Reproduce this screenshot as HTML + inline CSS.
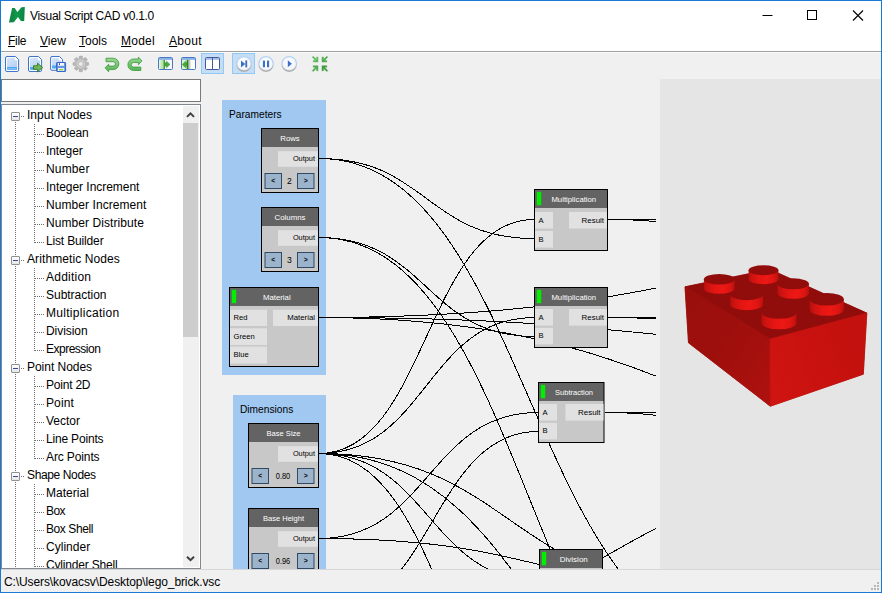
<!DOCTYPE html>
<html>
<head>
<meta charset="utf-8">
<title>Visual Script CAD v0.1.0</title>
<style>
html,body{margin:0;padding:0;}
body{width:882px;height:593px;overflow:hidden;background:#f0f0f0;font-family:"Liberation Sans",sans-serif;font-size:12px;color:#000;position:relative;}
.abs{position:absolute;}
#win{position:absolute;left:0;top:0;width:880px;height:591px;border:1px solid #1778d6;background:#f0f0f0;overflow:hidden;}
#titlebar{position:absolute;left:0;top:0;width:880px;height:30px;background:#fff;}
#title{position:absolute;left:29px;top:8px;font-size:12px;line-height:14px;white-space:nowrap;letter-spacing:-0.3px;}
#menubar{position:absolute;left:0;top:30px;width:880px;height:20px;background:#fff;}
.mi{position:absolute;top:3px;font-size:12px;line-height:14px;white-space:nowrap;}
.mi u{text-decoration:underline;text-underline-offset:1px;}
#menuline{position:absolute;left:0;top:50px;width:880px;height:1px;background:#a0a0a0;}
#toolbar{position:absolute;left:0;top:51px;width:880px;height:25px;background:#f0f0f0;box-shadow:inset 0 1px 0 #fbfbfb;}
.tsel{position:absolute;top:1px;width:21px;height:19px;background:#c5def5;border:1px solid #90c8f6;}
#search{position:absolute;left:0;top:78px;width:198px;height:21px;background:#fff;border:1px solid #7a7a7a;}
#tree{position:absolute;left:0;top:103px;width:198px;height:463px;background:#fff;border:1px solid #828790;overflow:hidden;}
.tr{position:absolute;left:0;height:18px;line-height:18px;font-size:12px;white-space:nowrap;}
.g{left:25px;}
.c{left:44px;}
.exp{position:absolute;width:7px;height:7px;border:1px solid #919191;background:linear-gradient(#fff,#e6e6e6);border-radius:1px;}
.exp i{position:absolute;left:1px;top:3px;width:5px;height:1px;background:#3a4a9a;}
.hd{position:absolute;height:1px;background:repeating-linear-gradient(90deg,#707070 0 1px,transparent 1px 2px);}
.vd{position:absolute;width:1px;background:repeating-linear-gradient(180deg,#707070 0 1px,transparent 1px 2px);}
#sb{position:absolute;left:181px;top:1px;width:16px;height:461px;background:#f0f0f0;}
#thumb{position:absolute;left:0;top:17px;width:15px;height:214px;background:#cdcdcd;}
#editor{position:absolute;left:203px;top:78px;width:452px;height:490px;overflow:hidden;background:#f0f0f0;}
#view3d{position:absolute;left:659px;top:78px;width:221px;height:490px;background:#e5e5e5;overflow:hidden;}
.gd{position:absolute;width:2px;height:2px;background:#b8b8b8;}
#grip{position:absolute;left:0;top:0;z-index:5;}
#status{position:absolute;left:0;top:568px;width:880px;height:23px;background:#f0f0f0;border-top:1px solid #d7d7d7;}
#stext{position:absolute;left:3px;top:5px;font-size:12px;line-height:14px;white-space:nowrap;letter-spacing:-0.1px;}
</style>
</head>
<body>
<div id="win">
  <div id="titlebar">
    <svg class="abs" style="left:0;top:0" width="30" height="30" viewBox="1 1 30 30">
      <defs><linearGradient id="lg" x1="0" y1="0" x2="1" y2="0"><stop offset="0" stop-color="#0b7f3f"/><stop offset="0.5" stop-color="#10994d"/><stop offset="1" stop-color="#0b8443"/></linearGradient></defs>
      <path d="M9 22.6 L12.1 8.1 L14.7 8.1 L17.4 11.9 L21.5 7.3 L24.8 7 L24.2 20.9 L20.9 21.1 L18 16.9 L13.9 22.2 Z" fill="url(#lg)"/>
    </svg>
    <div id="title">Visual Script CAD v0.1.0</div>
    <svg class="abs" style="left:740px;top:0" width="140" height="30" viewBox="0 0 140 30">
      <path d="M21.5 14.5 H31.5" stroke="#000" stroke-width="1" fill="none"/>
      <rect x="66.5" y="9.5" width="9" height="9" stroke="#000" stroke-width="1" fill="none"/>
      <path d="M112 9.5 L122 19.5 M122 9.5 L112 19.5" stroke="#000" stroke-width="1.1" fill="none"/>
    </svg>
  </div>
  <div id="menubar">
    <div class="mi" style="left:7px;letter-spacing:-0.3px"><u>F</u>ile</div>
    <div class="mi" style="left:39px"><u>V</u>iew</div>
    <div class="mi" style="left:78px"><u>T</u>ools</div>
    <div class="mi" style="left:120px;letter-spacing:0.25px"><u>M</u>odel</div>
    <div class="mi" style="left:168px;letter-spacing:0.3px"><u>A</u>bout</div>
  </div>
  <div id="menuline"></div>
  <div id="toolbar">
    <div class="tsel" style="left:200px"></div>
    <div class="tsel" style="left:231px"></div>
    <svg class="abs" style="left:0;top:0" width="340" height="25" viewBox="1 52 340 25">
      <defs>
        <linearGradient id="docg" x1="0" y1="0" x2="0.6" y2="1"><stop offset="0" stop-color="#d9e7fa"/><stop offset="1" stop-color="#b3cff3"/></linearGradient>
        <linearGradient id="grn" x1="0" y1="0" x2="0" y2="1"><stop offset="0" stop-color="#9ad694"/><stop offset="1" stop-color="#57b257"/></linearGradient>
        <linearGradient id="grnh" x1="0" y1="0" x2="1" y2="0"><stop offset="0" stop-color="#e4f9dc"/><stop offset="0.6" stop-color="#b4e2a6"/><stop offset="0.85" stop-color="#5cb458"/><stop offset="1" stop-color="#2a7d2a"/></linearGradient>
        <linearGradient id="shad" x1="0" y1="0" x2="1" y2="0"><stop offset="0" stop-color="#7f9f7f"/><stop offset="1" stop-color="#ffffff"/></linearGradient>
        <radialGradient id="circ" cx="0.5" cy="0.4" r="0.6"><stop offset="0" stop-color="#ffffff"/><stop offset="0.75" stop-color="#f4f6fa"/><stop offset="1" stop-color="#c8ccd4"/></radialGradient>
        <radialGradient id="gearg" cx="0.5" cy="0.5" r="0.5"><stop offset="0" stop-color="#d6d6d6"/><stop offset="0.6" stop-color="#bdbdbd"/><stop offset="1" stop-color="#a2a2a2"/></radialGradient>
        <linearGradient id="cst" x1="0" y1="0" x2="0" y2="1"><stop offset="0" stop-color="#b4d4f6"/><stop offset="0.55" stop-color="#b8cce6"/><stop offset="1" stop-color="#9a9a9a"/></linearGradient>
      </defs>
      <!-- new -->
      <path d="M7 56.500 H15.500 L18.600 59.600 V70 Q18.600 71.500 17.100 71.500 H7 Q5.500 71.500 5.500 70 V58 Q5.500 56.500 7 56.500 Z" fill="#fff" stroke="#3f74cc" stroke-width="1"/>
      <path d="M7 58 H14.800 V60.300 H17.100 V70 H7 Z" fill="url(#docg)"/>
      <rect x="7.200" y="67" width="9.600" height="2.700" fill="#49a9f2"/>
      <rect x="8" y="68" width="8" height="0.800" fill="#8cc8f6"/>
      <!-- open -->
      <path d="M30 56.500 H38.500 L41.600 59.600 V70 Q41.600 71.500 40.100 71.500 H30 Q28.500 71.500 28.500 70 V58 Q28.500 56.500 30 56.500 Z" fill="#fff" stroke="#3f74cc" stroke-width="1"/>
      <path d="M30 58 H37.800 V60.300 H40.100 V70 H30 Z" fill="url(#docg)"/>
      <rect x="30.200" y="67" width="5" height="2.700" fill="#49a9f2"/>
      <path d="M33.500 65.700 H37.500 V63.200 L42.700 67.500 L37.500 71.800 V69.300 H33.500 Z" fill="#74b45c" stroke="#2f7d1f" stroke-width="0.900" stroke-linejoin="round"/>
      <!-- save -->
      <path d="M52 56.500 H59.500 L62.600 59.600 V69 Q62.600 70.300 61.300 70.300 H52 Q50.600 70.300 50.600 69 V58 Q50.600 56.500 52 56.500 Z" fill="#fff" stroke="#3f74cc" stroke-width="1"/>
      <path d="M52 58 H58.800 V60.300 H61.100 V69 H52 Z" fill="url(#docg)"/>
      <rect x="52.200" y="65.500" width="5" height="2.700" fill="#49a9f2"/>
      <rect x="56.600" y="62.500" width="9" height="9" rx="0.600" fill="#6a94e4" stroke="#3565c6" stroke-width="1"/>
      <rect x="58" y="63" width="6" height="2.800" fill="#f2f6fd"/>
      <rect x="59" y="63.300" width="1" height="1.600" fill="#2a3f8a"/>
      <rect x="58" y="68" width="6.200" height="3" fill="#e6eefb"/>
      <rect x="59" y="69" width="4.200" height="1.400" fill="#8fd240"/>
      <!-- gear -->
      <g transform="translate(80.800 63.900)">
        <g fill="#b6b6b6" stroke="#a2a2a2" stroke-width="0.500">
          <rect x="-1.700" y="-7.800" width="3.400" height="15.600" rx="0.800"/>
          <rect x="-1.700" y="-7.800" width="3.400" height="15.600" rx="0.800" transform="rotate(45)"/>
          <rect x="-1.700" y="-7.800" width="3.400" height="15.600" rx="0.800" transform="rotate(90)"/>
          <rect x="-1.700" y="-7.800" width="3.400" height="15.600" rx="0.800" transform="rotate(135)"/>
        </g>
        <circle r="5.600" fill="#b9b9b9"/>
        <circle r="4.300" fill="#cdcdcd"/>
        <circle r="2.400" fill="#ececec" stroke="#adadad" stroke-width="0.600"/>
      </g>
      <!-- undo -->
      <path d="M106 58.200 H113.200 A5.600 5.700 0 0 1 113.200 69.600 H108.700 V71.800 L105 67.800 L108.700 64.200 V66.100 H113.200 A2.200 2.200 0 0 0 113.200 61.700 H106 Z" fill="url(#grn)" stroke="#45a045" stroke-width="0.900" stroke-linejoin="round"/>
      <!-- redo -->
      <path d="M138.400 59 H133.500 A5.600 5.750 0 0 0 133.500 70.500 H140.800 V67.100 H133.500 A2.300 2.300 0 0 1 133.500 62.500 H138.400 V64.700 L141.900 60.900 L138.400 57.100 Z" fill="url(#grn)" stroke="#45a045" stroke-width="0.900" stroke-linejoin="round"/>
      <!-- layout left -->
      <rect x="158.500" y="57.500" width="14" height="12" rx="1" fill="#f4f8fe" stroke="#4a78c8" stroke-width="1"/>
      <rect x="159" y="58" width="13" height="1.900" fill="#8ab0e8"/>
      <rect x="159" y="59.900" width="6" height="9.100" fill="url(#grnh)"/>
      <path d="M165 62.800 H166.500 V61.200 L170 64.400 L166.500 67.700 V66.100 H165 Z" fill="#4aa83e" stroke="#3a8f34" stroke-width="0.500"/>
      <!-- layout right -->
      <rect x="181.500" y="57.500" width="14" height="12" rx="1" fill="#ffffff" stroke="#4a78c8" stroke-width="1"/>
      <rect x="182" y="58" width="13" height="1.900" fill="#8ab0e8"/>
      <rect x="182" y="59.900" width="5" height="9.100" fill="#d2f4c6"/>
      <rect x="188" y="59.900" width="3.200" height="9.100" fill="url(#shad)"/>
      <rect x="186.700" y="59.900" width="1.300" height="9.100" fill="#2a7d2a"/>
      <path d="M187 62.800 H185.600 V61.200 L182.300 64.400 L185.600 67.700 V66.100 H187 Z" fill="#4aa83e" stroke="#3a8f34" stroke-width="0.500"/>
      <!-- split -->
      <rect x="205.500" y="57.500" width="14" height="12" rx="1" fill="#ffffff" stroke="#44589e" stroke-width="1"/>
      <rect x="206" y="58" width="13" height="1.900" fill="#a9bfe8"/>
      <rect x="212" y="58" width="1" height="11" fill="#44589e"/>
      <!-- step -->
      <circle cx="244" cy="63.900" r="7.300" fill="url(#circ)" stroke="url(#cst)" stroke-width="1.100"/>
      <path d="M241 60.400 L245.300 63.900 L241 67.400 Z" fill="#3b70c4"/>
      <rect x="245.300" y="60.400" width="1.900" height="7" fill="#3b70c4"/>
      <!-- pause -->
      <circle cx="266" cy="63.900" r="7.300" fill="url(#circ)" stroke="url(#cst)" stroke-width="1.100"/>
      <rect x="262.900" y="60.600" width="2.100" height="6.600" fill="#3b70c4"/>
      <rect x="267" y="60.600" width="2.100" height="6.600" fill="#3b70c4"/>
      <!-- play -->
      <circle cx="289.200" cy="63.900" r="7.300" fill="url(#circ)" stroke="url(#cst)" stroke-width="1.100"/>
      <path d="M287.800 60.200 L291.900 63.700 L287.800 67.200 Z" fill="#3b70c4"/>
      <!-- fit arrows -->
      <path d="M313.2 62.0 L318.0 62.0 L318.0 57.0 L316.6 57.0 L316.6 59.6 L313.2 56.2 L312.2 57.2 L315.6 60.6 L313.2 60.6 Z" fill="#62ba62" stroke="#62ba62" stroke-width="0.5" stroke-linejoin="round"/>
      <path d="M326.8 62.0 L322.0 62.0 L322.0 57.0 L323.4 57.0 L323.4 59.6 L326.8 56.2 L327.8 57.2 L324.4 60.6 L326.8 60.6 Z" fill="#52ac52" stroke="#52ac52" stroke-width="0.5" stroke-linejoin="round"/>
      <path d="M313.2 65.8 L318.0 65.8 L318.0 70.8 L316.6 70.8 L316.6 68.2 L313.2 71.6 L312.2 70.6 L315.6 67.2 L313.2 67.2 Z" fill="#52ac52" stroke="#52ac52" stroke-width="0.5" stroke-linejoin="round"/>
      <path d="M326.8 65.8 L322.0 65.8 L322.0 70.8 L323.4 70.8 L323.4 68.2 L326.8 71.6 L327.8 70.6 L324.4 67.2 L326.8 67.2 Z" fill="#409c40" stroke="#409c40" stroke-width="0.5" stroke-linejoin="round"/>
    </svg>

  </div>
  <div id="search"></div>
  <div id="tree">
<div class="tr g" style="top:1px;letter-spacing:0.036px">Input Nodes</div>
<div class="exp" style="left:9px;top:7px"><i></i></div>
<div class="hd" style="left:19px;top:11px;width:4px"></div>
<div class="tr c" style="top:19px;letter-spacing:-0.243px">Boolean</div>
<div class="hd" style="left:33px;top:29px;width:9px"></div>
<div class="tr c" style="top:37px;letter-spacing:-0.1px">Integer</div>
<div class="hd" style="left:33px;top:47px;width:9px"></div>
<div class="tr c" style="top:55px;letter-spacing:0.15px">Number</div>
<div class="hd" style="left:33px;top:65px;width:9px"></div>
<div class="tr c" style="top:73px;letter-spacing:-0.041px">Integer Increment</div>
<div class="hd" style="left:33px;top:83px;width:9px"></div>
<div class="tr c" style="top:91px;letter-spacing:0.069px">Number Increment</div>
<div class="hd" style="left:33px;top:101px;width:9px"></div>
<div class="tr c" style="top:109px;letter-spacing:0.076px">Number Distribute</div>
<div class="hd" style="left:33px;top:119px;width:9px"></div>
<div class="tr c" style="top:127px;letter-spacing:-0.158px">List Builder</div>
<div class="hd" style="left:33px;top:137px;width:9px"></div>
<div class="tr g" style="top:145px;letter-spacing:0.094px">Arithmetic Nodes</div>
<div class="exp" style="left:9px;top:151px"><i></i></div>
<div class="hd" style="left:19px;top:155px;width:4px"></div>
<div class="tr c" style="top:163px;letter-spacing:0.237px">Addition</div>
<div class="hd" style="left:33px;top:173px;width:9px"></div>
<div class="tr c" style="top:181px;letter-spacing:-0.018px">Subtraction</div>
<div class="hd" style="left:33px;top:191px;width:9px"></div>
<div class="tr c" style="top:199px;letter-spacing:0.286px">Multiplication</div>
<div class="hd" style="left:33px;top:209px;width:9px"></div>
<div class="tr c" style="top:217px;letter-spacing:-0.062px">Division</div>
<div class="hd" style="left:33px;top:227px;width:9px"></div>
<div class="tr c" style="top:235px;letter-spacing:-0.5px">Expression</div>
<div class="hd" style="left:33px;top:245px;width:9px"></div>
<div class="tr g" style="top:253px;letter-spacing:-0.027px">Point Nodes</div>
<div class="exp" style="left:9px;top:259px"><i></i></div>
<div class="hd" style="left:19px;top:263px;width:4px"></div>
<div class="tr c" style="top:271px;letter-spacing:-0.213px">Point 2D</div>
<div class="hd" style="left:33px;top:281px;width:9px"></div>
<div class="tr c" style="top:289px;letter-spacing:0.12px">Point</div>
<div class="hd" style="left:33px;top:299px;width:9px"></div>
<div class="tr c" style="top:307px;letter-spacing:0.0px">Vector</div>
<div class="hd" style="left:33px;top:317px;width:9px"></div>
<div class="tr c" style="top:325px;letter-spacing:-0.182px">Line Points</div>
<div class="hd" style="left:33px;top:335px;width:9px"></div>
<div class="tr c" style="top:343px;letter-spacing:-0.12px">Arc Points</div>
<div class="hd" style="left:33px;top:353px;width:9px"></div>
<div class="tr g" style="top:361px;letter-spacing:-0.373px">Shape Nodes</div>
<div class="exp" style="left:9px;top:367px"><i></i></div>
<div class="hd" style="left:19px;top:371px;width:4px"></div>
<div class="tr c" style="top:379px;letter-spacing:0.037px">Material</div>
<div class="hd" style="left:33px;top:389px;width:9px"></div>
<div class="tr c" style="top:397px;letter-spacing:-0.567px">Box</div>
<div class="hd" style="left:33px;top:407px;width:9px"></div>
<div class="tr c" style="top:415px;letter-spacing:-0.422px">Box Shell</div>
<div class="hd" style="left:33px;top:425px;width:9px"></div>
<div class="tr c" style="top:433px;letter-spacing:0.025px">Cylinder</div>
<div class="hd" style="left:33px;top:443px;width:9px"></div>
<div class="tr c" style="top:451px;letter-spacing:-0.179px">Cylinder Shell</div>
<div class="hd" style="left:33px;top:461px;width:9px"></div>
<div class="vd" style="left:13px;top:17px;height:134px"></div>
<div class="vd" style="left:13px;top:161px;height:98px"></div>
<div class="vd" style="left:13px;top:269px;height:98px"></div>
<div class="vd" style="left:13px;top:377px;height:116px"></div>
<div class="vd" style="left:32px;top:19px;height:119px"></div>
<div class="vd" style="left:32px;top:163px;height:83px"></div>
<div class="vd" style="left:32px;top:271px;height:83px"></div>
<div class="vd" style="left:32px;top:379px;height:92px"></div>
    <div id="sb"><div id="thumb"></div>
      <svg class="abs" style="left:-1px;top:0" width="17" height="17" viewBox="0 0 17 17"><path d="M5 10.9 L8.5 7.4 L12 10.9" stroke="#404040" stroke-width="2" fill="none"/></svg>
      <svg class="abs" style="left:-1px;top:444px" width="17" height="17" viewBox="0 0 17 17"><path d="M5 6.7 L8.5 10.2 L12 6.7" stroke="#404040" stroke-width="2" fill="none"/></svg>
    </div>
  </div>
  <div id="editor">
<svg class="abs" style="left:0;top:0" width="452" height="490" viewBox="204 79 452 490" font-family="Liberation Sans, sans-serif">
<rect x="222" y="100" width="104" height="275" fill="#a0c8f0"/>
<text x="229" y="117.6" text-anchor="start" fill="#000" font-size="10.2" >Parameters</text>
<rect x="233" y="395" width="93" height="205" fill="#a0c8f0"/>
<text x="240" y="412.6" text-anchor="start" fill="#000" font-size="10.2" >Dimensions</text>
<g fill="none" stroke="#000" stroke-width="1" shape-rendering="crispEdges">
<path d="M319 158.5 C426.5 158.5 426.5 238.5 534 238.5"/>
<path d="M319 158.5 C529.5 158.5 529.5 640 740 640"/>
<path d="M319 237.5 C426.5 237.5 426.5 336.5 534 336.5"/>
<path d="M319 237.5 C529.5 237.5 529.5 760 740 760"/>
<path d="M319 317.5 C735.0 317.5 735.0 225 1151 225"/>
<path d="M319 317.5 C653.0 317.5 653.0 350.5 987 350.5"/>
<path d="M319 317.5 C735.0 317.5 735.0 502 1151 502"/>
<path d="M319 453.5 C426.5 453.5 426.5 219.5 534 219.5"/>
<path d="M319 453.5 C426.5 453.5 426.5 317.5 534 317.5"/>
<path d="M319 453.5 C509.5 453.5 509.5 586 700 586"/>
<path d="M319 453.5 C564.0 453.5 564.0 845 809 845"/>
<path d="M319 453.5 C429.0 453.5 429.0 580.5 539 580.5"/>
<path d="M319 453.5 C445.5 453.5 445.5 748 572 748"/>
<path d="M319 538.5 C428.5 538.5 428.5 412.5 538 412.5"/>
<path d="M319 538.5 C559.5 538.5 559.5 601 800 601"/>
<path d="M327 611 C432.5 611 432.5 431.5 538 431.5"/>
<path d="M440 599 C620.0 599 620.0 497 800 497"/>
<path d="M608 219.5 C684.0 219.5 684.0 219.5 760 219.5"/>
<path d="M608 219.5 C684.0 219.5 684.0 231 760 231"/>
<path d="M608 317.5 C684.0 317.5 684.0 317.5 760 317.5"/>
<path d="M608 317.5 C684.0 317.5 684.0 324 760 324"/>
<path d="M604.5 412.5 C682.2 412.5 682.2 412.5 760 412.5"/>
<path d="M604.5 412.5 C682.2 412.5 682.2 427 760 427"/>
</g>
<rect x="261" y="128" width="58" height="65" fill="#000"/>
<rect x="262" y="129" width="56" height="18" fill="#636363"/>
<rect x="262" y="147" width="56" height="45" fill="#c8c8c8"/>
<text x="290.0" y="141" text-anchor="middle" fill="#fff" font-size="7.8"  textLength="19.4" lengthAdjust="spacingAndGlyphs">Rows</text>
<rect x="278" y="151.2" width="40" height="15.6" fill="#e1e1e1"/>
<text x="315" y="161.39999999999998" text-anchor="end" fill="#000" font-size="7.6"  textLength="22.1" lengthAdjust="spacingAndGlyphs">Output</text>
<rect x="265.0" y="173.5" width="16.5" height="15" fill="#9bb3cb" stroke="#2e4a66" stroke-width="1"/>
<text x="273.25" y="183.4" text-anchor="middle" fill="#000" font-size="6.8" font-weight="bold">&lt;</text>
<rect x="297.5" y="173.5" width="16.5" height="15" fill="#9bb3cb" stroke="#2e4a66" stroke-width="1"/>
<text x="305.75" y="183.4" text-anchor="middle" fill="#000" font-size="6.8" font-weight="bold">&gt;</text>
<text x="289.5" y="184.2" text-anchor="middle" fill="#000" font-size="8.6" >2</text>
<rect x="261" y="207" width="58" height="65" fill="#000"/>
<rect x="262" y="208" width="56" height="18" fill="#636363"/>
<rect x="262" y="226" width="56" height="45" fill="#c8c8c8"/>
<text x="290.0" y="220" text-anchor="middle" fill="#fff" font-size="7.8"  textLength="30.8" lengthAdjust="spacingAndGlyphs">Columns</text>
<rect x="278" y="230.2" width="40" height="15.6" fill="#e1e1e1"/>
<text x="315" y="240.39999999999998" text-anchor="end" fill="#000" font-size="7.6"  textLength="22.1" lengthAdjust="spacingAndGlyphs">Output</text>
<rect x="265.0" y="252.5" width="16.5" height="15" fill="#9bb3cb" stroke="#2e4a66" stroke-width="1"/>
<text x="273.25" y="262.4" text-anchor="middle" fill="#000" font-size="6.8" font-weight="bold">&lt;</text>
<rect x="297.5" y="252.5" width="16.5" height="15" fill="#9bb3cb" stroke="#2e4a66" stroke-width="1"/>
<text x="305.75" y="262.4" text-anchor="middle" fill="#000" font-size="6.8" font-weight="bold">&gt;</text>
<text x="289.5" y="263.2" text-anchor="middle" fill="#000" font-size="8.6" >3</text>
<rect x="229" y="287" width="90" height="80" fill="#000"/>
<rect x="230" y="288" width="88" height="18" fill="#636363"/>
<rect x="230" y="306" width="88" height="60" fill="#c8c8c8"/>
<rect x="231.8" y="289.8" width="4.4" height="13.4" fill="#00ee00"/>
<text x="276.8" y="300" text-anchor="middle" fill="#fff" font-size="7.8"  textLength="27.8" lengthAdjust="spacingAndGlyphs">Material</text>
<rect x="230" y="309.8" width="37" height="16.2" fill="#e1e1e1"/>
<text x="233.5" y="320.0" text-anchor="start" fill="#000" font-size="7.6" >Red</text>
<rect x="230" y="328.3" width="37" height="16.8" fill="#e1e1e1"/>
<text x="233.5" y="338.5" text-anchor="start" fill="#000" font-size="7.6" >Green</text>
<rect x="230" y="346.6" width="37" height="16.9" fill="#e1e1e1"/>
<text x="233.5" y="356.8" text-anchor="start" fill="#000" font-size="7.6" >Blue</text>
<rect x="273" y="309.8" width="45" height="16.2" fill="#e1e1e1"/>
<text x="315" y="320.0" text-anchor="end" fill="#000" font-size="7.6"  textLength="27.8" lengthAdjust="spacingAndGlyphs">Material</text>
<rect x="248" y="423" width="71" height="65" fill="#000"/>
<rect x="249" y="424" width="69" height="18" fill="#636363"/>
<rect x="249" y="442" width="69" height="45" fill="#c8c8c8"/>
<text x="283.5" y="436" text-anchor="middle" fill="#fff" font-size="7.8"  textLength="34.2" lengthAdjust="spacingAndGlyphs">Base Size</text>
<rect x="278" y="446.2" width="40" height="15.6" fill="#e1e1e1"/>
<text x="315" y="456.4" text-anchor="end" fill="#000" font-size="7.6"  textLength="22.1" lengthAdjust="spacingAndGlyphs">Output</text>
<rect x="252.0" y="468.5" width="16.5" height="15" fill="#9bb3cb" stroke="#2e4a66" stroke-width="1"/>
<text x="260.25" y="478.4" text-anchor="middle" fill="#000" font-size="6.8" font-weight="bold">&lt;</text>
<rect x="297.5" y="468.5" width="16.5" height="15" fill="#9bb3cb" stroke="#2e4a66" stroke-width="1"/>
<text x="305.75" y="478.4" text-anchor="middle" fill="#000" font-size="6.8" font-weight="bold">&gt;</text>
<text x="283.0" y="479.2" text-anchor="middle" fill="#000" font-size="9"  textLength="14.5" lengthAdjust="spacingAndGlyphs">0.80</text>
<rect x="248" y="508" width="71" height="65" fill="#000"/>
<rect x="249" y="509" width="69" height="18" fill="#636363"/>
<rect x="249" y="527" width="69" height="45" fill="#c8c8c8"/>
<text x="283.5" y="521" text-anchor="middle" fill="#fff" font-size="7.8"  textLength="41.1" lengthAdjust="spacingAndGlyphs">Base Height</text>
<rect x="278" y="531.2" width="40" height="15.6" fill="#e1e1e1"/>
<text x="315" y="541.4000000000001" text-anchor="end" fill="#000" font-size="7.6"  textLength="22.1" lengthAdjust="spacingAndGlyphs">Output</text>
<rect x="252.0" y="553.5" width="16.5" height="15" fill="#9bb3cb" stroke="#2e4a66" stroke-width="1"/>
<text x="260.25" y="563.4" text-anchor="middle" fill="#000" font-size="6.8" font-weight="bold">&lt;</text>
<rect x="297.5" y="553.5" width="16.5" height="15" fill="#9bb3cb" stroke="#2e4a66" stroke-width="1"/>
<text x="305.75" y="563.4" text-anchor="middle" fill="#000" font-size="6.8" font-weight="bold">&gt;</text>
<text x="283.0" y="564.2" text-anchor="middle" fill="#000" font-size="9"  textLength="14.5" lengthAdjust="spacingAndGlyphs">0.96</text>
<rect x="534" y="189" width="74" height="62" fill="#000"/>
<rect x="535" y="190" width="72" height="18" fill="#636363"/>
<rect x="535" y="208" width="72" height="42" fill="#c8c8c8"/>
<rect x="536.8" y="191.8" width="4.4" height="13.4" fill="#00ee00"/>
<text x="573.8" y="202" text-anchor="middle" fill="#fff" font-size="7.8"  textLength="44.8" lengthAdjust="spacingAndGlyphs">Multiplication</text>
<rect x="535" y="211.9" width="18" height="16.6" fill="#e1e1e1"/>
<text x="538.5" y="222.75" text-anchor="start" fill="#000" font-size="7.6" >A</text>
<rect x="535" y="231" width="18" height="16.6" fill="#e1e1e1"/>
<text x="538.5" y="241.85" text-anchor="start" fill="#000" font-size="7.6" >B</text>
<rect x="569" y="211.9" width="38" height="16.6" fill="#e1e1e1"/>
<text x="604" y="222.75" text-anchor="end" fill="#000" font-size="7.6"  textLength="22.4" lengthAdjust="spacingAndGlyphs">Result</text>
<rect x="534" y="287" width="74" height="61" fill="#000"/>
<rect x="535" y="288" width="72" height="18" fill="#636363"/>
<rect x="535" y="306" width="72" height="41" fill="#c8c8c8"/>
<rect x="536.8" y="289.8" width="4.4" height="13.4" fill="#00ee00"/>
<text x="573.8" y="300" text-anchor="middle" fill="#fff" font-size="7.8"  textLength="44.8" lengthAdjust="spacingAndGlyphs">Multiplication</text>
<rect x="535" y="309" width="18" height="16.6" fill="#e1e1e1"/>
<text x="538.5" y="319.6" text-anchor="start" fill="#000" font-size="7.6" >A</text>
<rect x="535" y="327.8" width="18" height="16.6" fill="#e1e1e1"/>
<text x="538.5" y="338.40000000000003" text-anchor="start" fill="#000" font-size="7.6" >B</text>
<rect x="569" y="309" width="38" height="16.6" fill="#e1e1e1"/>
<text x="604" y="319.6" text-anchor="end" fill="#000" font-size="7.6"  textLength="22.4" lengthAdjust="spacingAndGlyphs">Result</text>
<rect x="538" y="382" width="66.5" height="61" fill="#000"/>
<rect x="539" y="383" width="64.5" height="18" fill="#636363"/>
<rect x="539" y="401" width="64.5" height="41" fill="#c8c8c8"/>
<rect x="540.8" y="384.8" width="4.4" height="13.4" fill="#00ee00"/>
<text x="574.05" y="395" text-anchor="middle" fill="#fff" font-size="7.8"  textLength="38" lengthAdjust="spacingAndGlyphs">Subtraction</text>
<rect x="539" y="404" width="18" height="16.6" fill="#e1e1e1"/>
<text x="542.5" y="414.6" text-anchor="start" fill="#000" font-size="7.6" >A</text>
<rect x="539" y="422.8" width="18" height="16.6" fill="#e1e1e1"/>
<text x="542.5" y="433.40000000000003" text-anchor="start" fill="#000" font-size="7.6" >B</text>
<rect x="565.5" y="404" width="38" height="16.6" fill="#e1e1e1"/>
<text x="600.5" y="414.6" text-anchor="end" fill="#000" font-size="7.6"  textLength="22.4" lengthAdjust="spacingAndGlyphs">Result</text>
<rect x="539" y="549" width="64" height="61" fill="#000"/>
<rect x="540" y="550" width="62" height="18" fill="#636363"/>
<rect x="540" y="568" width="62" height="41" fill="#c8c8c8"/>
<rect x="541.8" y="551.8" width="4.4" height="13.4" fill="#00ee00"/>
<text x="573.8" y="562" text-anchor="middle" fill="#fff" font-size="7.8"  textLength="27.9" lengthAdjust="spacingAndGlyphs">Division</text>
<rect x="540" y="571" width="18" height="16.6" fill="#e1e1e1"/>
<text x="543.5" y="581.6" text-anchor="start" fill="#000" font-size="7.6" >A</text>
<rect x="540" y="589.8" width="18" height="16.6" fill="#e1e1e1"/>
<text x="543.5" y="600.4" text-anchor="start" fill="#000" font-size="7.6" >B</text>
<rect x="564" y="571" width="38" height="16.6" fill="#e1e1e1"/>
<text x="599" y="581.6" text-anchor="end" fill="#000" font-size="7.6"  textLength="22.4" lengthAdjust="spacingAndGlyphs">Result</text>
</svg>

</div>
  <div id="view3d">
<svg class="abs" style="left:0;top:0" width="221" height="490" viewBox="660 79 221 490">
<defs>
<linearGradient id="lf" gradientUnits="userSpaceOnUse" x1="686" y1="315" x2="770" y2="372"><stop offset="0" stop-color="#9a0f0c"/><stop offset="0.45" stop-color="#9e0f0c"/><stop offset="0.8" stop-color="#a5100d"/><stop offset="1" stop-color="#ab110e"/></linearGradient>
<linearGradient id="rf" gradientUnits="userSpaceOnUse" x1="770" y1="372" x2="866" y2="343"><stop offset="0" stop-color="#cf1411"/><stop offset="0.5" stop-color="#c8120f"/><stop offset="1" stop-color="#c2110e"/></linearGradient>
<linearGradient id="sg" x1="0" y1="0" x2="1" y2="0"><stop offset="0" stop-color="#b5100e"/><stop offset="0.12" stop-color="#cc1310"/><stop offset="0.35" stop-color="#e41613"/><stop offset="0.6" stop-color="#ee1815"/><stop offset="0.85" stop-color="#dc1512"/><stop offset="1" stop-color="#b8110e"/></linearGradient>
</defs>
<polygon points="685.0,286.8 770.0,269.4 866.8,313.1 863.3,374.2 770.3,406.2 688.5,342.8" fill="#a8100d" stroke="#a8100d" stroke-width="0.6" stroke-linejoin="round"/>
<polygon points="685.0,286.8 770.0,269.4 866.8,313.1 770.2,339.0" fill="#900d0b" stroke="#900d0b" stroke-width="0.6" stroke-linejoin="round"/>
<polygon points="685.0,286.8 770.2,339.0 770.3,406.2 688.5,342.8" fill="url(#lf)" stroke="url(#lf)" stroke-width="0.6" stroke-linejoin="round"/>
<polygon points="770.2,339.0 866.8,313.1 863.3,374.2 770.3,406.2" fill="url(#rf)" stroke="url(#rf)" stroke-width="0.6" stroke-linejoin="round"/>
<path d="M748.6 270.3 V279.2 A14.9 5.0 0 0 0 778.4 279.2 V270.3 Z" fill="url(#sg)"/>
<ellipse cx="763.5" cy="270.3" rx="14.9" ry="5.0" fill="#900d0b"/>
<path d="M703.9 279.3 V288.5 A15.3 5.3 0 0 0 734.5 288.5 V279.3 Z" fill="url(#sg)"/>
<ellipse cx="719.2" cy="279.3" rx="15.3" ry="5.3" fill="#900d0b"/>
<path d="M777.5 283.8 V293.3 A15.7 5.5 0 0 0 808.9 293.3 V283.8 Z" fill="url(#sg)"/>
<ellipse cx="793.2" cy="283.8" rx="15.7" ry="5.5" fill="#900d0b"/>
<path d="M730.4 294.5 V304.4 A16.3 5.8 0 0 0 763.0 304.4 V294.5 Z" fill="url(#sg)"/>
<ellipse cx="746.7" cy="294.5" rx="16.3" ry="5.8" fill="#900d0b"/>
<path d="M809.8 299.2 V309.5 A17 6.3 0 0 0 843.8 309.5 V299.2 Z" fill="url(#sg)"/>
<ellipse cx="826.8" cy="299.2" rx="17" ry="6.3" fill="#900d0b"/>
<path d="M761.5 312.5 V323.0 A17.5 6.3 0 0 0 796.5 323.0 V312.5 Z" fill="url(#sg)"/>
<ellipse cx="779" cy="312.5" rx="17.5" ry="6.3" fill="#900d0b"/>
</svg>

</div>
  <div id="grip"><i class="gd" style="left:876px;top:581px"></i><i class="gd" style="left:873px;top:584px"></i><i class="gd" style="left:876px;top:584px"></i><i class="gd" style="left:870px;top:587px"></i><i class="gd" style="left:873px;top:587px"></i><i class="gd" style="left:876px;top:587px"></i></div>
  <div id="status"><div id="stext">C:\Users\kovacsv\Desktop\lego_brick.vsc</div></div>
</div>
</body>
</html>
